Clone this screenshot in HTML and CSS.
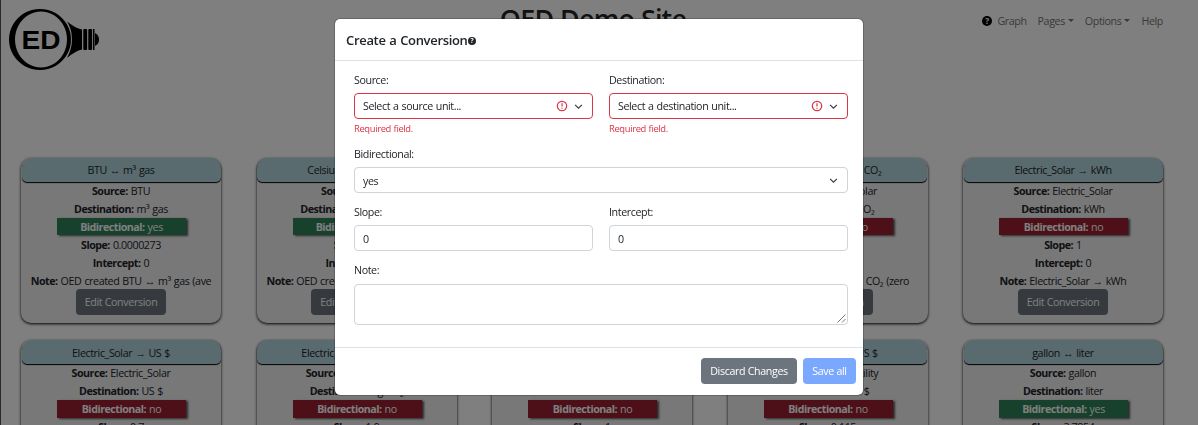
FILE: index.html
```
<!DOCTYPE html>
<html lang="en">
<head>
<meta charset="utf-8">
<title>OED Demo Site</title>
<link rel="stylesheet" href="styles.css">
</head>
<body>
<div class="page">
  <header class="site-header">
    <svg class="logo" viewBox="0 0 92 62" width="92" height="62">
      <path fill-rule="evenodd" d="M31 0a31 30.500 0 1 0 .01 0zM32 2.500a26 28 0 1 1-.01 0z"/>
      <path d="M58 12.500Q66 19 73 20.500V40.500Q66 42 58 49Q63 40 63 30.500Q63 20 58 12.500z"/>
      <rect x="74.300" y="20" width="3.800" height="21" rx="1"/><rect x="79.300" y="20" width="3.800" height="21" rx="1"/><rect x="84" y="20" width="1.500" height="21"/>
      <path d="M86 24q4 2 4 6.500t-4 6.500z"/>
      <text class="logo-text" x="12.500" y="40" textLength="39" lengthAdjust="spacingAndGlyphs">ED</text>
    </svg>
    <h1 class="site-title">OED Demo Site</h1>
    <nav class="nav">
      <svg class="nav-help" viewBox="0 0 16 16"><circle cx="8" cy="8" r="8"/><text x="8" y="12.500">?</text></svg>
      <a>Graph</a><a class="dropdown">Pages</a><a class="dropdown">Options</a><a>Help</a>
    </nav>
  </header>
  <main class="cards">
    <article class="card"><h2>BTU ↔ m³ gas</h2><p><b>Source:</b> BTU</p><p><b>Destination:</b> m³ gas</p><p class="tag yes"><b>Bidirectional:</b> yes</p><p><b>Slope:</b> 0.0000273</p><p><b>Intercept:</b> 0</p><p><b>Note:</b> OED created BTU ↔ m³ gas (ave</p><button class="btn">Edit Conversion</button></article>
    <article class="card"><h2>Celsius ↔ Fahrenheit</h2><p><b>Source:</b> Celsius</p><p><b>Destination:</b> Fahrenheit</p><p class="tag yes"><b>Bidirectional:</b> yes</p><p><b>Slope:</b> 1.8</p><p><b>Intercept:</b> 32</p><p class="long"><b>Note:</b> OED created Celsius ↔ Fahrenheit</p><button class="btn">Edit Conversion</button></article>
    <article class="card"><h2>Electric_Solar → BTU</h2><p><b>Source:</b> Electric_Solar</p><p><b>Destination:</b> BTU</p><p class="tag no"><b>Bidirectional:</b> no</p><p><b>Slope:</b> 1</p><p><b>Intercept:</b> 0</p><p><b>Note:</b> Electric_Solar → BTU</p><button class="btn">Edit Conversion</button></article>
    <article class="card"><h2>Electric_Solar → kg CO₂</h2><p><b>Source:</b> Electric_Solar</p><p><b>Destination:</b> kg CO₂</p><p class="tag no"><b>Bidirectional:</b> no</p><p><b>Slope:</b> 0</p><p><b>Intercept:</b> 0</p><p><b>Note:</b> Electric_Solar → kg CO₂ (zero</p><button class="btn">Edit Conversion</button></article>
    <article class="card"><h2>Electric_Solar → kWh</h2><p><b>Source:</b> Electric_Solar</p><p><b>Destination:</b> kWh</p><p class="tag no"><b>Bidirectional:</b> no</p><p><b>Slope:</b> 1</p><p><b>Intercept:</b> 0</p><p><b>Note:</b> Electric_Solar → kWh</p><button class="btn">Edit Conversion</button></article>
    <article class="card"><h2>Electric_Solar → US $</h2><p><b>Source:</b> Electric_Solar</p><p><b>Destination:</b> US $</p><p class="tag no"><b>Bidirectional:</b> no</p><p><b>Slope:</b> 0.7</p></article>
    <article class="card"><h2>Electric_Utility → kg CO₂</h2><p><b>Source:</b> Electric_Utility</p><p><b>Destination:</b> kg CO₂</p><p class="tag no"><b>Bidirectional:</b> no</p><p><b>Slope:</b> 1.9</p></article>
    <article class="card"><h2>Electric_Utility → kWh</h2><p><b>Source:</b> Electric_Utility</p><p><b>Destination:</b> kWh</p><p class="tag no"><b>Bidirectional:</b> no</p><p><b>Slope:</b> 1</p></article>
    <article class="card"><h2>Electric_Utility → US $</h2><p><b>Source:</b> Electric_Utility</p><p><b>Destination:</b> US $</p><p class="tag no"><b>Bidirectional:</b> no</p><p><b>Slope:</b> 0.115</p></article>
    <article class="card"><h2>gallon ↔ liter</h2><p><b>Source:</b> gallon</p><p><b>Destination:</b> liter</p><p class="tag yes"><b>Bidirectional:</b> yes</p><p><b>Slope:</b> 3.7854</p></article>
  </main>
</div>
<div class="backdrop">
  <section class="modal">
    <header class="modal-header"><h3>Create a Conversion</h3><svg class="title-help" viewBox="0 0 16 16"><circle cx="8" cy="8" r="8"/><text x="8" y="12.500">?</text></svg></header>
    <div class="modal-body">
      <div class="field"><label>Source:</label><div class="control invalid"><span>Select a source unit...</span><svg class="alert" viewBox="0 0 12 12"><circle cx="6" cy="6" r="4.700"/><path d="M6 3.300v3.200M6 7.700v1"/></svg><svg class="chevron" viewBox="0 0 16 16"><path d="m2 5 6 6 6-6"/></svg></div><small>Required field.</small></div>
      <div class="field"><label>Destination:</label><div class="control invalid"><span>Select a destination unit...</span><svg class="alert" viewBox="0 0 12 12"><circle cx="6" cy="6" r="4.700"/><path d="M6 3.300v3.200M6 7.700v1"/></svg><svg class="chevron" viewBox="0 0 16 16"><path d="m2 5 6 6 6-6"/></svg></div><small>Required field.</small></div>
      <div class="field wide"><label>Bidirectional:</label><div class="control low"><span>yes</span><svg class="chevron" viewBox="0 0 16 16"><path d="m2 5 6 6 6-6"/></svg></div></div>
      <div class="field"><label>Slope:</label><div class="control low"><span>0</span></div></div>
      <div class="field"><label>Intercept:</label><div class="control low"><span>0</span></div></div>
      <div class="field wide"><label>Note:</label><div class="control note"><svg class="grip" viewBox="0 0 9 9"><path d="M.5 8.500l8-8M5 8.500l3.500-3.500"/></svg></div></div>
    </div>
    <footer class="modal-footer"><button class="btn discard">Discard Changes</button><button class="btn primary">Save all</button></footer>
  </section>
</div>
</body>
</html>
```
FILE: styles.css
```
* { box-sizing: border-box; }
body {
  margin: 0;
  height: 425px;
  overflow: hidden;
  background: #fff;
  color: #212529;
  font: 10.7px/18px "Open Sans", "Noto Sans", sans-serif;
  letter-spacing: -0.4px;
  word-spacing: 0.6px;
}
h1, h2, h3, p { margin: 0; font-weight: 400; font-size: inherit; }
.page { height: 425px; overflow: hidden; border-left: 1px solid #555; }
.site-header {
  display: grid;
  grid-template-columns: 1fr auto 1fr;
  align-items: start;
  height: 158px;
  padding: 9px 35px 0 8px;
}
.logo { display: block; }
.logo-text { font: bold 26px "Liberation Sans", sans-serif; letter-spacing: 0; word-spacing: 0; }
.site-title { padding-left: 14px; font-size: 26.8px; line-height: 20px; font-weight: 600; letter-spacing: -0.75px; }
.nav { display: flex; justify-content: flex-end; align-items: center; gap: 11px; padding-top: 3px; color: #737373; }
.nav-help { width: 10px; height: 10px; margin-right: -6px; }
.nav-help circle, .title-help circle { fill: #000; }
.title-help circle { fill: #212529; }
.nav-help text, .title-help text { fill: #fff; font: bold 13px "Open Sans", sans-serif; text-anchor: middle; }
.dropdown::after { content: ""; display: inline-block; margin-left: 3px; vertical-align: 3px; border: 3px solid transparent; border-top-color: currentColor; border-bottom: 0; }
.cards { display: grid; grid-template-columns: repeat(5, 200px); column-gap: 35.5px; row-gap: 17px; padding-left: 20px; }
.card {
  display: flex;
  flex-direction: column;
  align-items: center;
  height: 165px;
  border-radius: 10px;
  background: #f0f0f0;
  box-shadow: 0 1px 3px #000;
  white-space: nowrap;
}
.card h2 { width: 199px; height: 24px; line-height: 24px; text-align: center; border-radius: 10px 10px 5px 5px; background: #b2d6df; box-shadow: 0 1px 1px #000; }
.card p { height: 18px; }
.card:nth-child(n+6) h2 { line-height: 26px; }
.card .long { width: 180px; overflow: hidden; }
.card .tag { width: 129px; height: 17px; line-height: 19px; margin: 0 0 1px 1px; text-align: center; color: #fff; box-shadow: 2px 1px 2px #555; }
.card:nth-child(n+6) .tag { height: 18px; margin-bottom: 0; }
.tag.yes { background: #2e8259; }
.tag.no { background: #9b2030; }
b { font-weight: 700; letter-spacing: -0.5px; }
.btn { height: 26px; padding: 0 9px; border: 0; border-radius: 4px; background: #6c757d; color: #fff; font: inherit; letter-spacing: -0.35px; }
.card .btn { height: 26px; margin-top: -1px; }
.btn.discard, .btn.primary { padding: 0; font-weight: 500; }
.btn.discard { width: 96px; }
.btn.primary { width: 53px; background: #7aa8fe; }
.backdrop { position: fixed; inset: 0; display: flex; justify-content: center; align-items: flex-start; padding-top: 18px; background: rgba(0, 0, 0, .5); }
.modal { width: 530px; height: 378px; border: 1px solid rgba(0, 0, 0, .2); border-radius: 6px; background: #fff; background-clip: padding-box; }
.modal-header { display: flex; align-items: center; height: 42px; padding-left: 11px; border-bottom: 1px solid #dee2e6; }
.modal-header h3 { font-size: 13px; line-height: 16px; font-weight: 600; letter-spacing: -0.32px; }
.title-help { width: 8px; height: 8px; margin-top: 3px; }
.modal-body { display: grid; grid-template-columns: 239px 239px; column-gap: 16px; align-content: start; height: 286px; padding: 11px 19px 0; }
.field { display: flex; flex-direction: column; height: 58px; }
.field:nth-child(-n+2) { height: 74px; }
.wide { grid-column: span 2; }
.field label { flex: none; height: 21px; line-height: 17px; }
.control { flex: none; display: flex; align-items: center; height: 26px; padding: 0 9px 0 8px; border: 1px solid #ced4da; border-radius: 4px; }
.control span { flex: 1; }
.control.low { padding-top: 1px; }
.invalid { border-color: #dc3545; }
.alert { width: 12px; height: 12px; margin-right: 6px; fill: none; stroke: #dc3545; stroke-width: 1.2; }
.chevron { width: 9px; height: 9px; fill: none; stroke: #343a40; stroke-width: 2; }
.field small { color: #dc3545; font-size: 9.4px; line-height: 19px; letter-spacing: -0.35px; }
.control.note { height: 41px; margin-top: 1px; align-items: flex-end; justify-content: flex-end; padding: 1px; }
.grip { width: 9px; height: 9px; fill: none; stroke: #555; stroke-width: .8; }
.modal-footer { display: flex; justify-content: flex-end; gap: 6px; height: 48px; padding: 10px 7px 0; border-top: 1px solid #dee2e6; }
```
